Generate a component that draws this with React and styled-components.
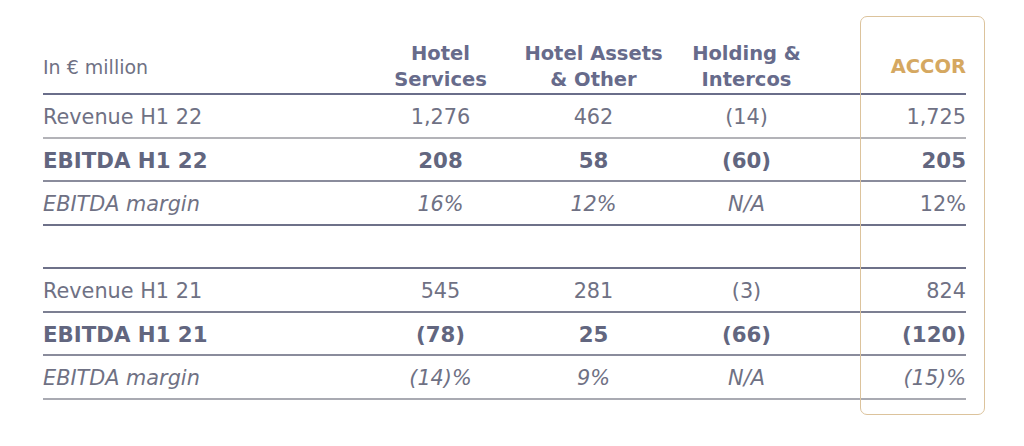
import React from 'react';
import styled, { createGlobalStyle } from 'styled-components';

const GlobalStyle = createGlobalStyle`
  body {
    margin: 0;
    background: #ffffff;
    font-family: "DejaVu Sans", Verdana, sans-serif;
  }
`;

const Page = styled.div`
  position: relative;
  width: 1024px;
  height: 446px;
  padding: 35px 0 0 43px;
  box-sizing: border-box;
`;

const Grid = styled.div`
  display: grid;
  grid-template-columns: 321px 153px 153px 153px 143px;
  width: 923px;
`;

const Cell = styled.div`
  display: flex;
  align-items: center;
  justify-content: ${p => (p.$align === 'left' ? 'flex-start' : p.$align === 'right' ? 'flex-end' : 'center')};
  height: 38.5px;
  padding-top: ${p => (p.$bold ? '2px' : '3px')};
  height: ${p => (p.$bold ? '39.5px' : '38.5px')};
  border-bottom: 2px solid ${p => p.$line || '#7c7f95'};
  color: ${p => (p.$bold ? '#62667f' : '#6f7184')};
  font-size: ${p => (p.$bold ? '21.3px' : '20.8px')};
  font-weight: ${p => (p.$bold ? 700 : 400)};
  font-style: ${p => (p.$italic ? 'italic' : 'normal')};
  white-space: nowrap;
`;

const HeadCell = styled(Cell)`
  line-height: 26px;
  text-align: center;
  white-space: pre-line;
  color: ${p => (p.$gold ? '#d5a861' : p.$plain ? '#6f7184' : '#676b8b')};
  font-weight: ${p => (p.$plain ? 400 : 700)};
  font-size: ${p => (p.$plain ? '19px' : '19.5px')};
  padding-top: ${p => (p.$gold ? '6px' : '5px')};
  height: ${p => (p.$gold ? '52px' : '53px')};
  border-bottom-color: #6a6e8a;
`;

const Frame = styled.div`
  position: absolute;
  left: 860px;
  top: 16px;
  width: 125px;
  height: 399px;
  box-sizing: border-box;
  border: 1.5px solid #dcc39c;
  border-radius: 7px;
  pointer-events: none;
`;

const rows = [
  { label: 'Revenue H1 22', vals: ['1,276', '462', '(14)', '1,725'], line: '#b3b3b8' },
  { label: 'EBITDA H1 22', vals: ['208', '58', '(60)', '205'], bold: true, line: '#8a8c9c' },
  { label: 'EBITDA margin', vals: ['16%', '12%', 'N/A', '12%'], italic: true, lastPlain: true, line: '#6e7189' },
  { spacer: true, line: '#6e7189' },
  { label: 'Revenue H1 21', vals: ['545', '281', '(3)', '824'], line: '#7c7f92' },
  { label: 'EBITDA H1 21', vals: ['(78)', '25', '(66)', '(120)'], bold: true, line: '#8a8c9c' },
  { label: 'EBITDA margin', vals: ['(14)%', '9%', 'N/A', '(15)%'], italic: true, line: '#a9aab2' },
];

export default function App() {
  return (
    <Page>
      <GlobalStyle />
      <Grid>
        <HeadCell $align="left" $plain>In € million</HeadCell>
        <HeadCell>{'Hotel\nServices'}</HeadCell>
        <HeadCell>{'Hotel Assets\n& Other'}</HeadCell>
        <HeadCell>{'Holding &\nIntercos'}</HeadCell>
        <HeadCell $align="right" $gold>ACCOR</HeadCell>
        {rows.map((r, i) =>
          r.spacer ? (
            [0, 1, 2, 3, 4].map(k => <Cell key={`s${k}`} $line={r.line} />)
          ) : (
            <React.Fragment key={i}>
              <Cell $align="left" $bold={r.bold} $italic={r.italic} $line={r.line}>
                {r.label}
              </Cell>
              {r.vals.map((v, j) => (
                <Cell
                  key={j}
                  $align={j === 3 ? 'right' : 'center'}
                  $bold={r.bold}
                  $italic={r.italic && !(r.lastPlain && j === 3)}
                  $line={r.line}
                >
                  {v}
                </Cell>
              ))}
            </React.Fragment>
          )
        )}
      </Grid>
      <Frame />
    </Page>
  );
}
